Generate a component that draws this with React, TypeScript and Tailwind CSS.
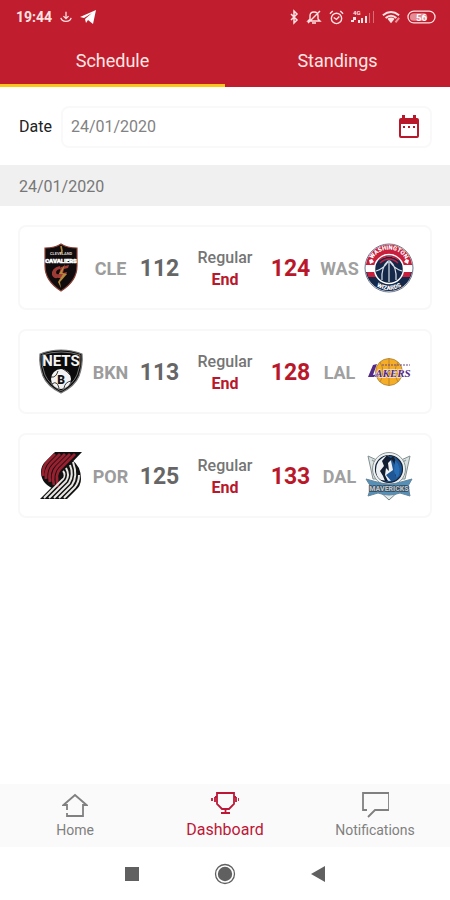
import type { FC, ReactNode } from 'react';
import { useState } from 'react';

const CavaliersLogo: FC = () => (
  <svg viewBox="0 0 50 50" className="w-[50px] h-[50px]" aria-label="Cleveland Cavaliers">
    <path d="M25 1 Q31 5 41 5 L41 23 Q41 38 25 48 Q9 38 9 23 L9 5 Q19 5 25 1Z" fill="#100c0d" stroke="#8a3f34" strokeWidth="1.2" />
    <path d="M25 3 L26 8 L24.500 11" fill="none" stroke="#b58a3c" strokeWidth="1.600" />
    <text x="25" y="12" textAnchor="middle" fontSize="4" fontWeight="700" fill="#d8d0c8" fontFamily="Roboto, sans-serif">CLEVELAND</text>
    <text x="25" y="20" textAnchor="middle" fontSize="6" fontWeight="900" fill="#fff" stroke="#fff" strokeWidth="0.5" fontFamily="Roboto, sans-serif">CAVALIERS</text>
    <path d="M24 23 Q15 25 16 32 Q18 37 24 34 L23 31 Q20 32 20 29 Q21 26 25 26Z" fill="#9c3a35" />
    <path d="M25 24 L33 22 L32 25 L28 26 L27 30 L31 29 L30 32 L26 33 L25 35 L22 35Z" fill="#a33c36" />
    <path d="M29 21 L23 31 L27 31 L22 39 L25 45 L24 39 L31 31 L26 30Z" fill="#b58a3c" />
  </svg>
);

const WizardsLogo: FC = () => (
  <svg viewBox="0 0 50 50" className="w-[50px] h-[50px]" aria-label="Washington Wizards">
    <defs>
      <path id="wizards-top" d="M6.500 25 A18.500 18.500 0 0 1 43.500 25" />
      <path id="wizards-bottom" d="M3 25 A22 22 0 0 0 47 25" />
    </defs>
    <circle cx="25" cy="25" r="24" fill="#fff" stroke="#45566e" strokeWidth="0.8" />
    <path d="M1.800 22 A23.400 23.400 0 0 1 48.200 22Z" fill="#c8203c" />
    <path d="M2 29 A23.400 23.400 0 0 0 48 29Z" fill="#14284a" />
    <path d="M3 29H10L12 34H4ZM40 29H47L46 34H38Z" fill="#c8203c" />
    <circle cx="25" cy="26" r="14.500" fill="#14284a" stroke="#fff" strokeWidth="1.500" />
    <path d="M14 17 A15 15 0 0 1 36 17 Q25 10 14 17Z" fill="#fff" />
    <path d="M15 17 Q25 9 35 17M16 20 Q25 12 34 20" fill="none" stroke="#c8203c" strokeWidth="1.300" />
    <path d="M25 17V39M24 18 Q17 24 18 37M26 18 Q33 24 32 37M12 28 Q19 26 24 19M38 28 Q31 26 26 19" fill="none" stroke="#d8e0e7" strokeWidth="1.200" />
    <path d="M5 17 L8 16 L10 19 L6 21ZM45 17 L42 16 L40 19 L44 21Z" fill="#fff" />
    <text fontSize="6" fontWeight="900" fill="#fff" textAnchor="middle" fontFamily="Roboto, sans-serif">
      <textPath href="#wizards-top" startOffset="50%">WASHINGTON</textPath>
    </text>
    <text fontSize="6" fontWeight="900" fill="#fff" textAnchor="middle" fontFamily="Roboto, sans-serif">
      <textPath href="#wizards-bottom" startOffset="50%">WIZARDS</textPath>
    </text>
  </svg>
);

const NetsLogo: FC = () => (
  <svg viewBox="0 0 50 50" className="w-[50px] h-[50px]" aria-label="Brooklyn Nets">
    <path d="M25 3 Q36 3 46 7 Q47 18 43 29 Q39 39 25 46 Q11 39 7 29 Q3 18 4 7 Q14 3 25 3Z" fill="#0b0b0b" stroke="#777" strokeWidth="1.200" />
    <path d="M25 5 Q35 5 44 8 Q45 19 41 28 Q37 37 25 44 Q13 37 9 28 Q5 19 6 8 Q15 5 25 5Z" fill="none" stroke="#b9b9b9" strokeWidth="0.600" />
    <text x="25" y="19" textAnchor="middle" fontSize="15" fontWeight="700" fill="#f4f4f4" fontFamily="Roboto, sans-serif">NETS</text>
    <circle cx="25" cy="32" r="10" fill="#f2f2f2" />
    <path d="M15 30 Q20 31 22 24M27 22 Q31 24 35 29M16 37 Q21 33 23 41M28 41 Q29 35 35 34" fill="none" stroke="#222" strokeWidth="0.900" />
    <text x="25" y="37" textAnchor="middle" fontSize="12" fontWeight="900" fill="#111" fontFamily="Roboto, sans-serif">B</text>
  </svg>
);

const LakersLogo: FC = () => (
  <svg viewBox="0 0 50 50" className="w-[50px] h-[50px]" aria-label="Los Angeles Lakers">
    <circle cx="25" cy="25" r="13.500" fill="#f5ad25" stroke="#8c6a35" strokeWidth="0.600" />
    <path d="M12 27H38M25 11V39M16 15 Q22 25 16 35M34 15 Q28 25 34 35" fill="none" stroke="#a9772a" strokeWidth="0.700" />
    <path d="M18 18H46" stroke="#6c4a86" strokeWidth="1.200" strokeDasharray="2 1" />
    <path d="M9 18 L13 17 L9 28 L15 27 L14 30 L4 30Z" fill="#542a84" />
    <text x="29" y="30" textAnchor="middle" fontSize="11" fontWeight="700" fontStyle="italic" fill="#542a84" stroke="#fff" strokeWidth="0.800" paintOrder="stroke" fontFamily="Liberation Serif, serif">AKERS</text>
  </svg>
);

const BlazersLogo: FC = () => (
  <svg viewBox="0 0 50 50" className="w-[50px] h-[50px]" aria-label="Portland Trail Blazers">
    <path d="M19 1H46L26 22Q23 26 27 29L21 39Q5 34 5 21Q5 14 11 9Z" fill="#111" />
    <path d="M31 48H4L24 28Q27 25 24 21L36 9Q45 15 45 28Q45 35 39 40Z" fill="#111" />
    <path d="M19 3 L12 10 Q6 16 7 25M24 3 L15 12 Q9 18 10 28M29 3 L18 14 Q12 20 14 31M34 3 L21 16 Q15 23 18 34M39 3 L24 18 Q19 23 22 36" fill="none" stroke="#98202f" strokeWidth="2.800" />
    <path d="M8 47 L27 28 Q30 23 27 20M13 47 L30 30 Q34 24 30 17M18 47 L33 32 Q38 24 34 14M23 47 L36 34 Q42 25 37 11M28 47 L39 36 Q43 31 43 24" fill="none" stroke="#e8e6e2" strokeWidth="2" />
    <circle cx="25" cy="25" r="2.500" fill="#111" />
  </svg>
);

const MavericksLogo: FC = () => (
  <svg viewBox="0 0 50 50" className="w-[50px] h-[50px]" aria-label="Dallas Mavericks">
    <path d="M4 5 L15 10 L35 10 L46 5 L41 28 L9 28Z" fill="#dce1e2" stroke="#82908f" strokeWidth="1" />
    <path d="M8 9 L14 13 L14 23M42 9 L36 13 L36 23" fill="none" stroke="#91a09f" strokeWidth="1.200" />
    <path d="M14 39 L25 49 L36 39Z" fill="#e2e7e8" stroke="#75858a" />
    <circle cx="25" cy="18" r="16.500" fill="#eef1f1" stroke="#8a9494" strokeWidth="1" />
    <circle cx="25" cy="18" r="13.500" fill="#1f5796" stroke="#172335" strokeWidth="1.200" />
    <path d="M24 4 Q12 8 12 19 Q12 26 17 29 L27 30 L22 24 L29 19 L27 10Z" fill="#eff1f2" />
    <path d="M23 4 L18 10 L20 15 L16 20 L19 25 L21 30 L24 30 L21 24 L22 17 L25 20 L24 12 L28 8ZM27 7 L31 14 L31 24 L34 28 L33 20 Q33 10 29 5Z" fill="#111d31" />
    <path d="M31 9 Q39 17 33 28 L30 20Z" fill="#286eb5" />
    <path d="M2 28 L13 31 Q25 35 37 31 L48 28 L44 35 L46 45 L36 42 Q25 46 14 42 L4 45 L7 36Z" fill="#5590b8" stroke="#65859b" strokeWidth="1" />
    <text x="25" y="40" textAnchor="middle" fontSize="7" fontWeight="900" fill="#b9c0c5" stroke="#33475a" strokeWidth="1.500" paintOrder="stroke" fontFamily="Roboto, sans-serif">MAVERICKS</text>
  </svg>
);

interface Team {
  code: string;
  score: number;
  logo: ReactNode;
}

const games: { home: Team; away: Team }[] = [
  {
    home: { code: 'CLE', score: 112, logo: <CavaliersLogo /> },
    away: { code: 'WAS', score: 124, logo: <WizardsLogo /> },
  },
  {
    home: { code: 'BKN', score: 113, logo: <NetsLogo /> },
    away: { code: 'LAL', score: 128, logo: <LakersLogo /> },
  },
  {
    home: { code: 'POR', score: 125, logo: <BlazersLogo /> },
    away: { code: 'DAL', score: 133, logo: <MavericksLogo /> },
  },
];

const StatusBar: FC = () => (
  <div className="flex items-center justify-between h-[34px] pl-4 pr-[14px] text-[#ffe3e3]">
    <div className="flex items-center gap-2">
      <span className="text-sm font-bold">19:44</span>
      <svg viewBox="0 0 14 14" className="w-3 h-3" fill="none" stroke="currentColor" strokeWidth="1.500">
        <path d="M7 1V9M4 6L7 9L10 6M1 8Q2 12 7 12Q12 12 13 8" />
      </svg>
      <svg viewBox="0 0 16 14" className="w-4 h-[14px]" fill="#fff">
        <path d="M0 7 L16 0 L13 14 L8 10 L6 13 L5 9 L12 3 L4 8Z" />
      </svg>
    </div>
    <div className="flex items-center gap-[7px]">
      <svg viewBox="0 0 10 16" className="w-[10px] h-4" fill="none" stroke="currentColor" strokeWidth="1.500">
        <path d="M2 5L8 11L5 14V2L8 5L2 11" />
      </svg>
      <svg viewBox="0 0 16 16" className="w-4 h-4" fill="none" stroke="currentColor" strokeWidth="1.400">
        <path d="M2 12H14L12 10V7Q12 3 8 3Q4 3 4 7V10ZM6 14H10M2 14L14 2" />
      </svg>
      <svg viewBox="0 0 16 16" className="w-[15px] h-[15px]" fill="none" stroke="currentColor" strokeWidth="1.500">
        <circle cx="8" cy="9" r="5.500" />
        <path d="M5 8L8 10L11 7M1 4L4 1M15 4L12 1" />
      </svg>
      <svg viewBox="0 0 24 16" className="w-6 h-4" fill="currentColor">
        <text x="2" y="6" fontSize="6" fontWeight="700" fontFamily="Roboto, sans-serif">4G</text>
        <path d="M2 8H5V11H3V13H0V11H2ZM7 11H9V14H7ZM10 9H12V14H10ZM14 7H16V14H14Z" />
        <path d="M18 4H19V14H18ZM22 2H23V14H22Z" opacity=".4" />
      </svg>
      <svg viewBox="0 0 20 16" className="w-[18px] h-4" fill="none" stroke="currentColor" strokeWidth="2.200">
        <path d="M1 6Q10 -1 19 6M4 9Q10 4 16 9" />
        <path d="M6 10Q10 7 14 10L10 15Z" fill="currentColor" stroke="none" />
        <path d="M15 14L19 9" opacity=".6" />
      </svg>
      <svg viewBox="0 0 30 14" className="w-[29px] h-[14px]">
        <rect x="1" y="1" width="28" height="12" rx="6" fill="none" stroke="currentColor" strokeWidth="1.300" />
        <rect x="3" y="3" width="18" height="8" rx="4" fill="#e58c94" />
        <text x="15" y="11" textAnchor="middle" fontSize="10" fontWeight="700" fill="#fff" fontFamily="Roboto, sans-serif">56</text>
      </svg>
    </div>
  </div>
);

const CalendarIcon: FC = () => (
  <svg viewBox="0 0 22 24" className="w-[22px] h-6">
    <path d="M3 3H19Q21 3 21 5V21Q21 23 19 23H3Q1 23 1 21V5Q1 3 3 3ZM3 9V21H19V9Z" fill="#b9182b" fillRule="evenodd" />
    <path d="M4 0H7V4H4ZM15 0H18V4H15ZM5 11H7V13H5ZM10 11H12V13H10ZM15 11H17V13H15Z" fill="#b9182b" />
  </svg>
);

const GameCard: FC<{ home: Team; away: Team }> = ({ home, away }) => (
  <article className="grid grid-cols-[50px_49px_49px_1fr_49px_49px_50px] items-center h-[85px] px-4 rounded-lg border-2 border-[#f8f8f8] bg-white text-center">
    {home.logo}
    <span className="pt-0.5 text-lg font-bold text-[#9c9c9c]">{home.code}</span>
    <span className="pt-1 text-[23px] font-bold text-[#666]">{home.score}</span>
    <div className="flex flex-col pt-0.5 text-base leading-[22px]">
      <span className="font-medium text-[#757575]">Regular</span>
      <span className="font-bold text-[#b9182b]">End</span>
    </div>
    <span className="pt-1 text-[23px] font-bold text-[#b9182b]">{away.score}</span>
    <span className="pt-0.5 text-lg font-bold text-[#a0a0a0]">{away.code}</span>
    {away.logo}
  </article>
);

const App: FC = () => {
  const [tab, setTab] = useState('Schedule');
  const [date, setDate] = useState('24/01/2020');

  return (
    <div className="flex flex-col min-h-screen w-full bg-white font-['Roboto',sans-serif]">
      <header className="bg-[#c01e2e]">
        <StatusBar />
        <div className="flex h-[53px]">
          {['Schedule', 'Standings'].map(name => (
            <button
              key={name}
              type="button"
              onClick={() => setTab(name)}
              className={`flex-1 pt-1 border-b-3 text-lg text-[#ffe6e4] ${tab === name ? 'border-[#ffc61a]' : 'border-[#c01e2e]'}`}
            >
              {name}
            </button>
          ))}
        </div>
      </header>

      <main className="flex-1">
        <div className="flex items-center gap-[9px] h-[78px] pt-0.5 pl-[19px] pr-[18px]">
          <label htmlFor="date" className="text-base text-[#222]">Date</label>
          <div className="flex flex-1 items-center h-[42px] pl-2 pr-[10px] rounded-lg border-2 border-[#f9f9f9]">
            <input
              id="date"
              type="text"
              value={date}
              onChange={e => setDate(e.target.value)}
              className="flex-1 min-w-0 text-base text-[#828282] outline-none"
            />
            <button type="button" aria-label="Pick a date">
              <CalendarIcon />
            </button>
          </div>
        </div>
        <h2 className="flex items-center h-[41px] pt-0.5 px-[19px] bg-[#f0f0f0] text-base text-[#777]">{date}</h2>
        <div className="flex flex-col gap-[19px] px-[18px] py-[19px]">
          {games.map(game => (
            <GameCard key={game.home.code} home={game.home} away={game.away} />
          ))}
        </div>
      </main>

      <nav className="grid grid-cols-3 h-[63px] bg-[#fafafa] text-sm leading-5 text-[#808080]">
        <a href="#home" className="flex flex-col items-center justify-center gap-0.5">
          <svg viewBox="0 0 26 26" className="w-[26px] h-[26px]" fill="none" stroke="currentColor" strokeWidth="1.800">
            <path d="M5 18V13H1.500L13 3L24.500 13H21V24H5V21" />
          </svg>
          <span>Home</span>
        </a>
        <a href="#dashboard" className="flex flex-col items-center justify-center gap-0.5 text-base leading-5 text-[#bd1737]">
          <svg viewBox="0 0 28 26" className="w-7 h-[26px]" fill="none" stroke="currentColor" strokeWidth="1.800">
            <path d="M6 1H23V12L18 17H11L6 12ZM14.500 17V21M10 21H19M1 6V9M4 5V10M4 5H6M25 5V10M28 6V9M23 5H25" />
          </svg>
          <span>Dashboard</span>
        </a>
        <a href="#notifications" className="flex flex-col items-center justify-center gap-0.5">
          <svg viewBox="0 0 28 26" className="w-7 h-[26px]" fill="none" stroke="currentColor" strokeWidth="1.800">
            <path d="M6 18H2V1H28V18H14L7 25" />
          </svg>
          <span>Notifications</span>
        </a>
      </nav>

      <div className="flex items-center justify-center gap-[75px] h-[53px] text-[#606060]">
        <button type="button" aria-label="Recent apps">
          <svg viewBox="0 0 14 14" className="w-[14px] h-[14px]">
            <path d="M0 0H14V14H0Z" fill="currentColor" />
          </svg>
        </button>
        <button type="button" aria-label="Home screen">
          <svg viewBox="0 0 22 22" className="w-[22px] h-[22px]">
            <circle cx="11" cy="11" r="9.500" fill="none" stroke="currentColor" strokeWidth="1.300" />
            <circle cx="11" cy="11" r="7.200" fill="currentColor" />
          </svg>
        </button>
        <button type="button" aria-label="Back">
          <svg viewBox="0 0 14 16" className="w-[14px] h-4">
            <path d="M14 0V16L0 8Z" fill="currentColor" />
          </svg>
        </button>
      </div>
    </div>
  );
};

export default App;
